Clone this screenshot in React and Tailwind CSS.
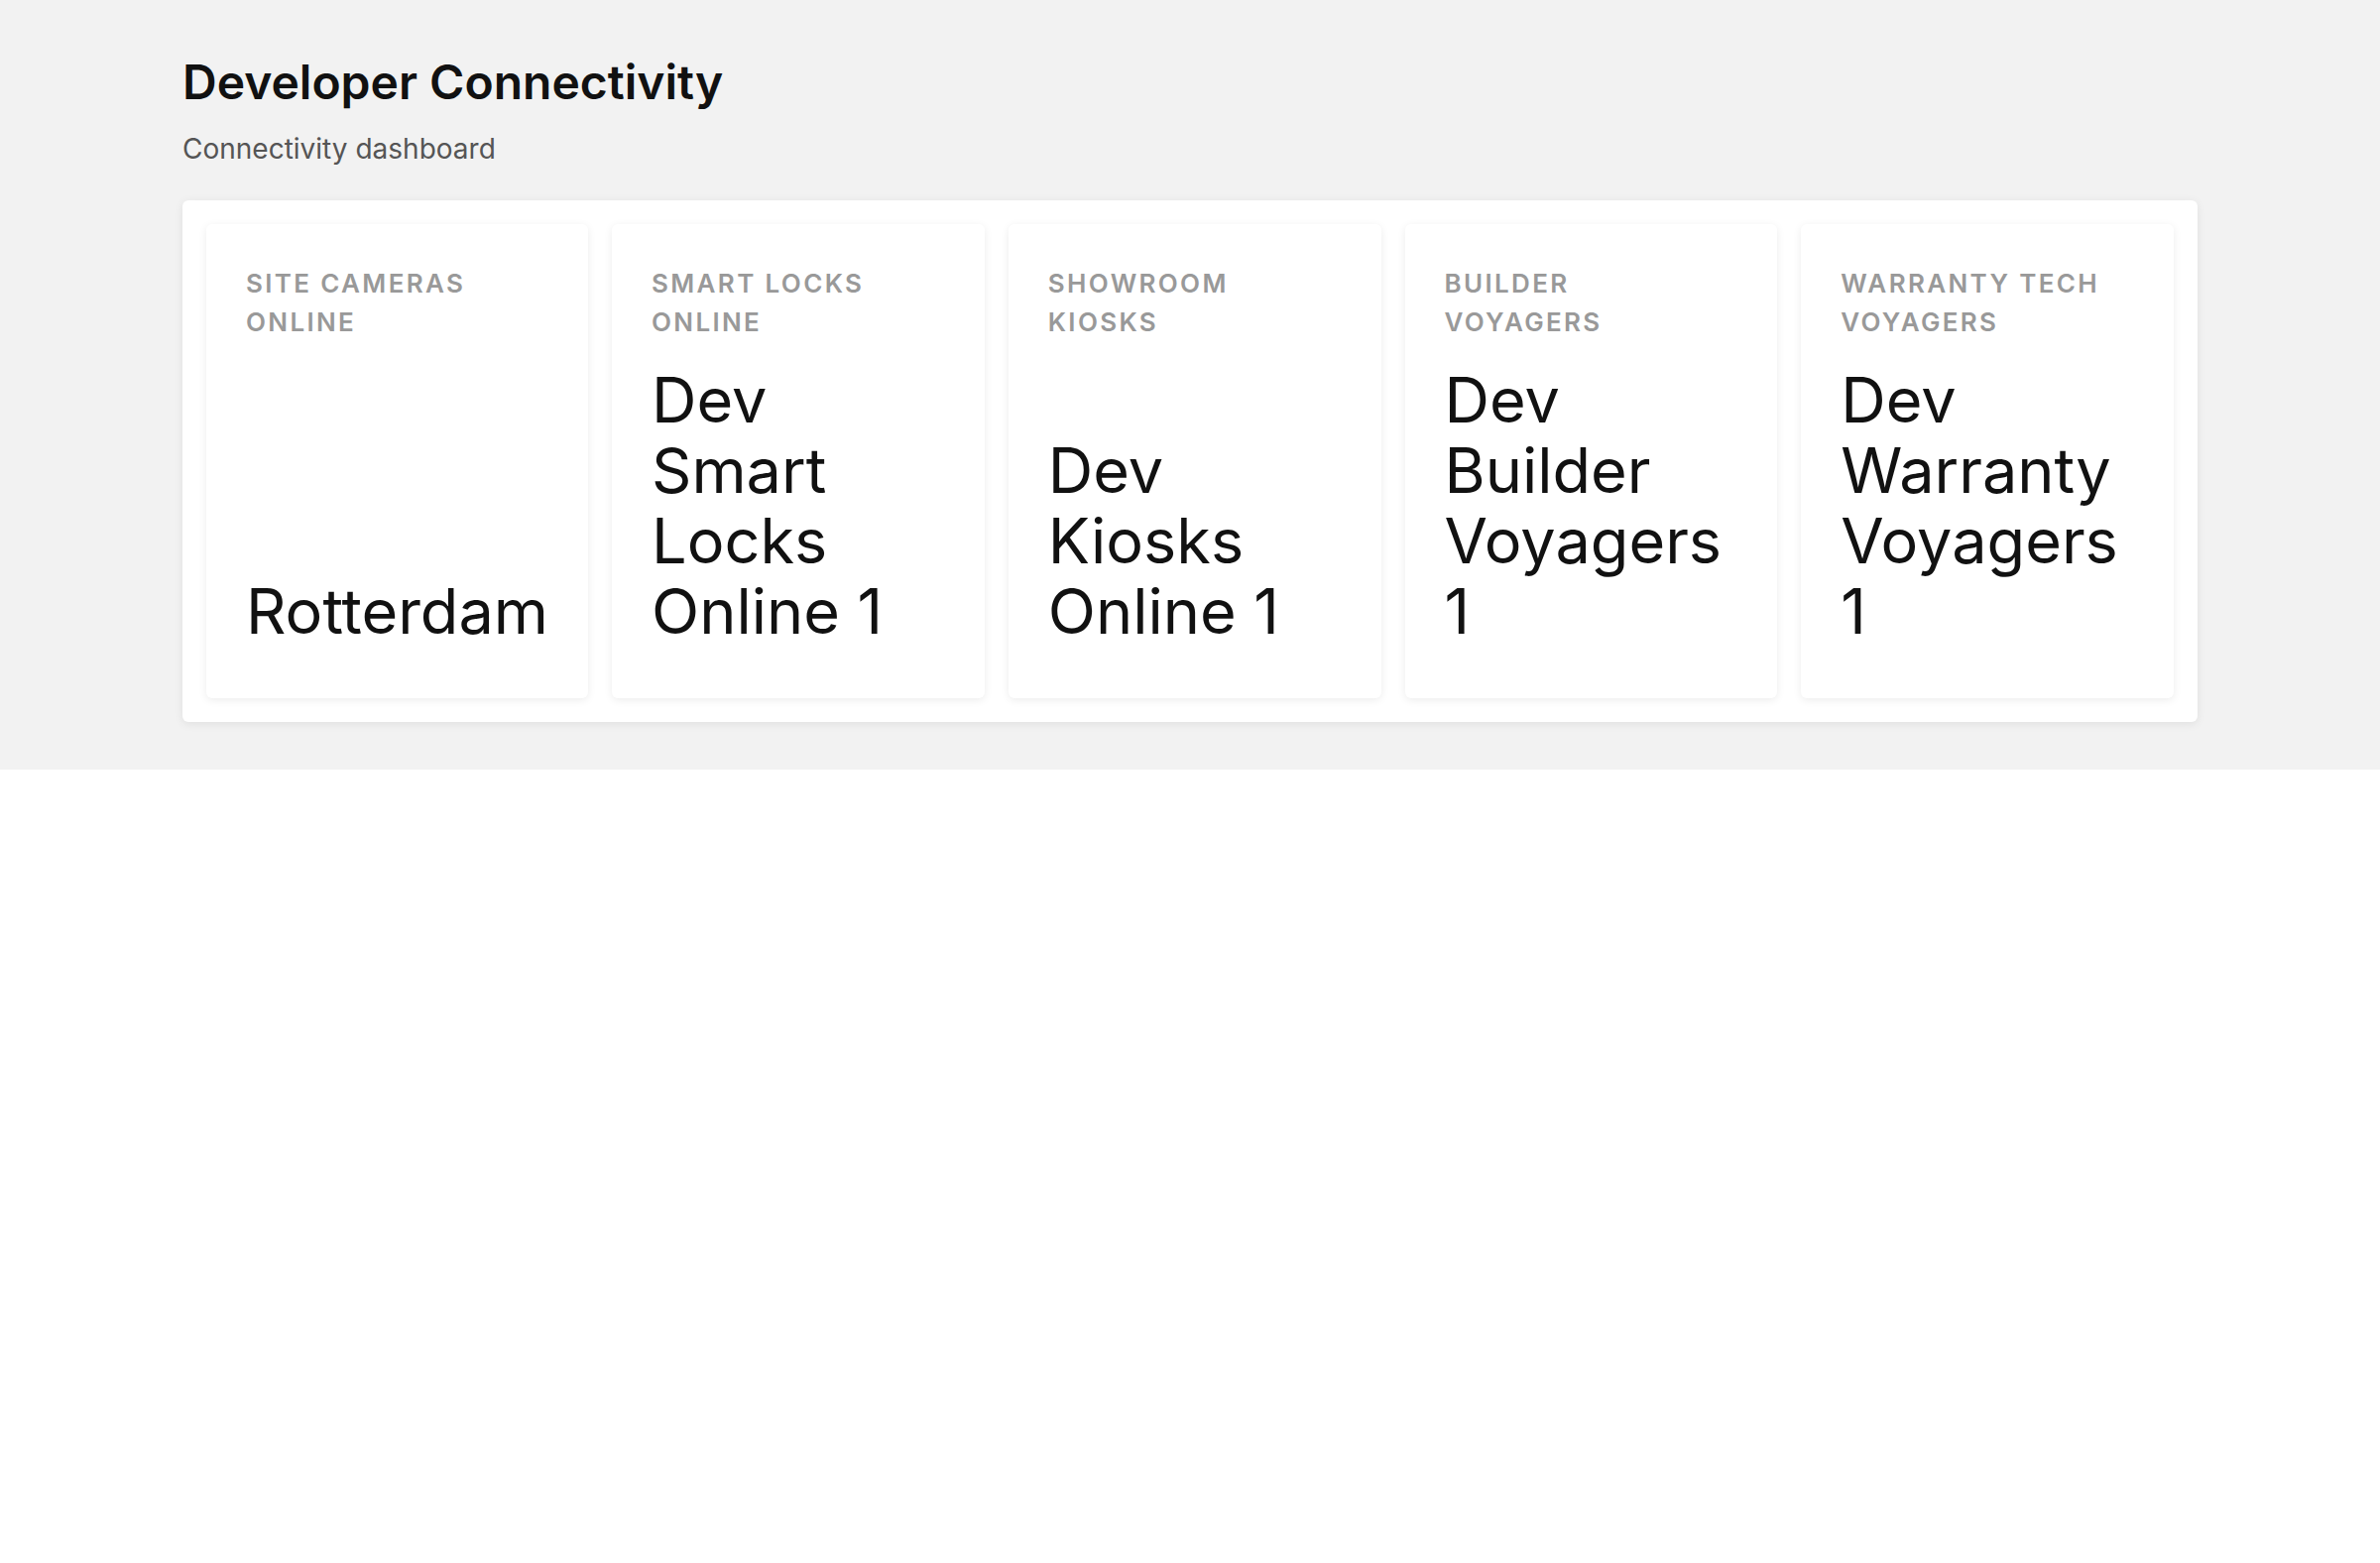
const stats = [
  { label: 'Site Cameras Online', value: 'Rotterdam' },
  { label: 'Smart Locks Online', value: 'Dev Smart Locks Online 1' },
  { label: 'Showroom Kiosks', value: 'Dev Kiosks Online 1' },
  { label: 'Builder Voyagers', value: 'Dev Builder Voyagers 1' },
  { label: 'Warranty Tech Voyagers', value: 'Dev Warranty Voyagers 1' },
];

export default function App() {
  return (
    <div className="min-h-screen bg-white font-['Inter',sans-serif]">
      {/* header + stats */}
      <section className="bg-[#f2f2f2] px-[184px] pt-[54px] pb-[48px]">
        <h1 className="text-[48px] leading-[1.2] font-semibold text-[#111]">Developer Connectivity</h1>
        <p className="mt-[18px] text-[28px] leading-[1.45] text-[#555]">Connectivity dashboard</p>

        <div className="mt-[32px] bg-white rounded-md p-6 shadow-[0_2px_10px_rgba(0,0,0,0.08)]">
          <div className="grid grid-cols-[repeat(5,1fr)] gap-6">
            {stats.map((s) => (
              <div key={s.label} className="flex flex-col justify-between bg-white rounded-md px-10 pt-10 pb-[52px] shadow-[0_2px_8px_rgba(0,0,0,0.08)]">
                <div className="pr-3 text-[26px] leading-[1.5] font-semibold uppercase tracking-[0.09em] text-[#999]">{s.label}</div>
                <div className="mt-6 text-[63px] leading-[71px] text-[#111]">{s.value}</div>
              </div>
            ))}
          </div>
        </div>
      </section>
    </div>
  );
}
